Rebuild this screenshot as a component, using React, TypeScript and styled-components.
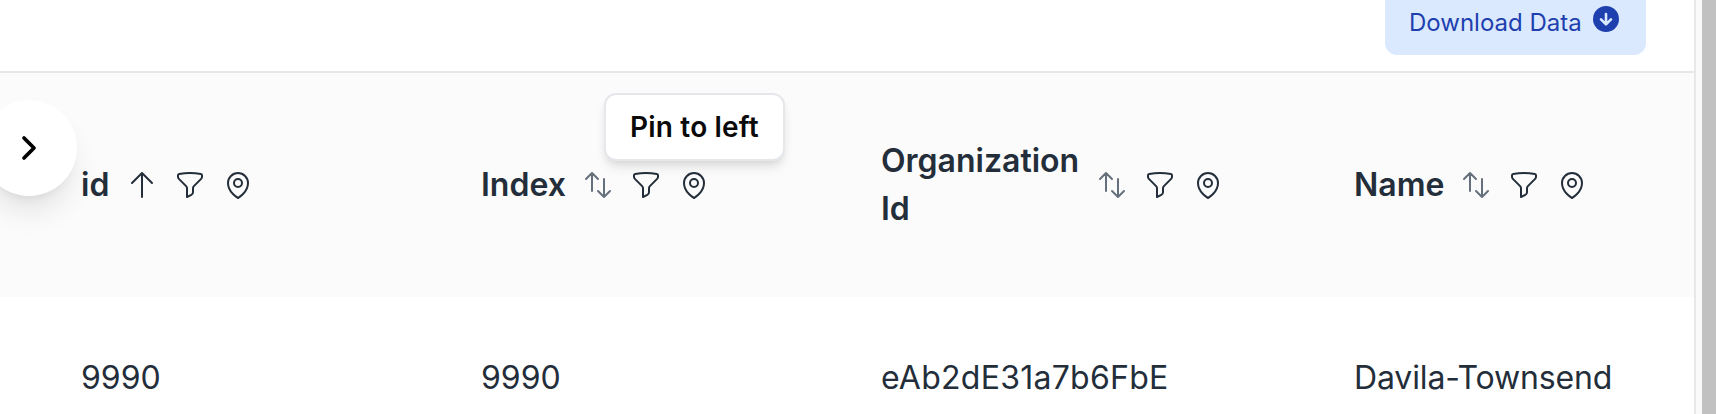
import React from 'react';
import styled, { createGlobalStyle } from 'styled-components';
import {
  HiOutlineArrowsUpDown,
  HiOutlineArrowUp,
  HiOutlineFunnel,
  HiOutlineMapPin,
} from 'react-icons/hi2';

const GlobalStyle = createGlobalStyle`
  *, *::before, *::after { box-sizing: border-box; }
  body {
    margin: 0;
    overflow: hidden;
    background: #fff;
    color: #232e3a;
    font-family: Inter, "Liberation Sans", sans-serif;
  }
  button {
    margin: 0;
    padding: 0;
    border: 0;
    background: none;
    color: inherit;
    font: inherit;
  }
`;

const Page = styled.div`
  position: relative;
  display: flex;
  height: 414px;
  overflow: hidden;
  background: #fafafa;
`;

const Panel = styled.main`
  display: flex;
  flex-direction: column;
  flex: 1;
  min-width: 0;
  overflow: hidden;
  background: #fff;
  border-right: 2px solid #e8e8e8;
`;

const ScrollTrack = styled.div`
  display: flex;
  justify-content: flex-end;
  flex: 0 0 20px;
`;

const ScrollThumb = styled.div`
  width: 14px;
  background: #c1c1c1;
`;

const Toolbar = styled.header`
  display: flex;
  flex: 0 0 73px;
  align-items: flex-end;
  justify-content: flex-end;
  padding: 0 48px 16px 0;
  border-bottom: 2px solid #e5e7eb;
`;

const DownloadButton = styled.button`
  display: flex;
  align-items: flex-start;
  justify-content: space-between;
  width: 261px;
  height: 55px;
  padding: 3px 24px 0;
  border-radius: 0 0 12px 12px;
  background: #dbe9fe;
  color: #1e40af;
  font-size: 24px;
  line-height: 39px;
  white-space: nowrap;
`;

const TableRow = styled.div<{ $head?: boolean }>`
  display: grid;
  grid-template-columns: 400px 400px 473px 1fr;
  flex: 0 0 ${(p) => (p.$head ? 224 : 162)}px;
  align-items: center;
  padding-left: 81px;
  background: ${(p) => (p.$head ? '#fbfbfb' : '#fff')};
  font-size: 32px;
  line-height: 48px;
`;

const HeadCell = styled.div`
  display: flex;
  align-items: center;
  gap: 16px;
  font-weight: 600;
`;

const Label = styled.span<{ $width?: number }>`
  width: ${(p) => (p.$width ? `${p.$width}px` : 'auto')};
`;

const IconButton = styled.button<{ $muted?: boolean }>`
  display: flex;
  flex: none;
  color: ${(p) => (p.$muted ? '#66707c' : 'inherit')};
`;

const Cell = styled.div<{ $tracking?: number }>`
  letter-spacing: ${(p) => p.$tracking ?? 0}px;
  white-space: nowrap;
`;

const ExpandButton = styled.button`
  position: absolute;
  top: 100px;
  left: -19px;
  display: flex;
  align-items: center;
  justify-content: center;
  width: 96px;
  height: 96px;
  border-radius: 50%;
  background: #fff;
  color: #000;
  box-shadow: 0 20px 30px -6px rgba(0, 0, 0, 0.1), 0 8px 12px -8px rgba(0, 0, 0, 0.1);
`;

const Tooltip = styled.div`
  position: absolute;
  top: 93px;
  left: 604px;
  width: 181px;
  height: 68px;
  border: 2px solid #e5e7eb;
  border-radius: 12px;
  background: #fff;
  color: #0a0a0a;
  box-shadow: 0 8px 12px -2px rgba(0, 0, 0, 0.1), 0 4px 8px -4px rgba(0, 0, 0, 0.1);
  font-size: 28px;
  font-weight: 600;
  letter-spacing: 0.18px;
  line-height: 64px;
  text-align: center;
  white-space: nowrap;
`;

type Column = {
  label: string;
  value: string;
  sorted?: boolean;
  width?: number;
  tracking?: number;
};

const columns: Column[] = [
  { label: 'id', value: '9990', sorted: true, width: 29 },
  { label: 'Index', value: '9990' },
  { label: 'Organization Id', value: 'eAb2dE31a7b6FbE', width: 199, tracking: 0.26 },
  { label: 'Name', value: 'Davila-Townsend', tracking: -0.14 },
];

function ColumnHeader({ label, sorted, width }: Column) {
  return (
    <HeadCell>
      <Label $width={width}>{label}</Label>
      <IconButton $muted={!sorted} aria-label="Sort">
        {sorted ? <HiOutlineArrowUp size={32} /> : <HiOutlineArrowsUpDown size={32} />}
      </IconButton>
      <IconButton aria-label="Filter">
        <HiOutlineFunnel size={32} />
      </IconButton>
      <IconButton aria-label="Pin to left">
        <HiOutlineMapPin size={32} />
      </IconButton>
    </HeadCell>
  );
}

function DownloadIcon() {
  return (
    <svg width="32" height="32" viewBox="0 0 32 32" fill="none">
      <circle cx="16" cy="16" r="13" fill="#1e40af" />
      <path
        d="M16 11v10M11 16.4l5 5 5-5"
        stroke="#dbe9fe"
        strokeWidth="2.6"
        strokeLinecap="round"
        strokeLinejoin="round"
      />
    </svg>
  );
}

export default function App() {
  return (
    <>
      <GlobalStyle />
      <Page>
        <Panel>
          <Toolbar>
            <DownloadButton>
              Download Data
              <DownloadIcon />
            </DownloadButton>
          </Toolbar>
          <TableRow $head>
            {columns.map((column) => (
              <ColumnHeader key={column.label} {...column} />
            ))}
          </TableRow>
          <TableRow>
            {columns.map((column) => (
              <Cell key={column.label} $tracking={column.tracking}>
                {column.value}
              </Cell>
            ))}
          </TableRow>
        </Panel>
        <ScrollTrack>
          <ScrollThumb />
        </ScrollTrack>
        <ExpandButton aria-label="Expand">
          <svg
            width="32"
            height="32"
            viewBox="0 0 24 24"
            fill="none"
            stroke="currentColor"
            strokeWidth="2.8"
            strokeLinecap="round"
            strokeLinejoin="round"
          >
            <path d="m8.25 4.5 7.5 7.5-7.5 7.5" />
          </svg>
        </ExpandButton>
        <Tooltip role="tooltip">Pin to left</Tooltip>
      </Page>
    </>
  );
}
